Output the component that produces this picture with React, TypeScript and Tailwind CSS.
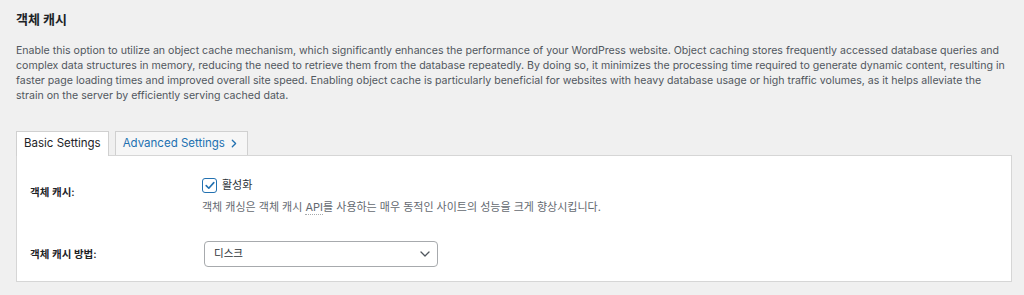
import React from "react";

const font = { fontFamily: 'Inter, "Noto Sans CJK KR", sans-serif' };

export default function App() {
  return (
    <div className="w-[1024px] h-[295px] bg-[#f0f0f0] px-4 overflow-hidden" style={font}>
      <h2 className="pt-[10px] text-[13px] leading-[18px] font-bold text-[#1d2327]">객체 캐시</h2>
      <p className="mt-[15px] w-[996px] whitespace-nowrap text-[10.58px] leading-[15px] text-[#50575e]">
        Enable this option to utilize an object cache mechanism, which significantly enhances the performance of your
        WordPress website. Object caching stores frequently accessed database queries and
        <br />
        complex data structures in memory, reducing the need to retrieve them from the database repeatedly. By doing
        so, it minimizes the processing time required to generate dynamic content, resulting in
        <br />
        faster page loading times and improved overall site speed. Enabling object cache is particularly beneficial for
        websites with heavy database usage or high traffic volumes, as it helps alleviate the
        <br />
        strain on the server by efficiently serving cached data.
      </p>

      <div className="mt-[28px] flex items-end gap-[6px]">
        <div className="relative z-10 -mb-px h-[25px] flex items-center border border-b-0 border-[#d0d0d0] bg-white px-[7px] text-[11.5px] text-[#1d2327]">
          Basic Settings
        </div>
        <div className="h-[24px] flex items-center gap-[6px] border border-b-0 border-[#d0d0d0] bg-[#f6f6f6] pl-[7px] pr-[10px] text-[11.5px] text-[#2271b1]">
          Advanced Settings
          <svg width="6" height="9" viewBox="0 0 6 9" fill="none">
            <path d="M1.3 1.2L4.6 4.5L1.3 7.8" stroke="#2271b1" strokeWidth="1.3" strokeLinecap="round" strokeLinejoin="round" />
          </svg>
        </div>
      </div>

      <div className="w-[996px] h-[127px] border border-[#d6d6d6] bg-white px-[13px]">
        <div className="flex">
          <div className="w-[172px] pt-[29px] text-[10.5px] leading-[15px] font-semibold text-[#1d2327]">
            객체 캐시:
          </div>
          <div className="pt-[22px]">
            <label className="flex items-center gap-[5px] h-[15px]">
              <span className="w-[15px] h-[15px] rounded-[3px] border-[1.5px] border-[#2271b1] flex items-center justify-center bg-white">
                <svg width="10" height="9" viewBox="0 0 10 9" fill="none">
                  <path d="M1.2 4.6L3.8 7.2L8.8 1.6" stroke="#2271b1" strokeWidth="1.6" strokeLinecap="round" strokeLinejoin="round" />
                </svg>
              </span>
              <span className="text-[11px] text-[#2c3338]">활성화</span>
            </label>
            <div className="mt-[7px] text-[11px] leading-[14px] text-[#646970] whitespace-nowrap">
              객체 캐싱은 객체 캐시{" "}
              <abbr className="no-underline border-b border-dotted border-[#a7aaad]" title="Application Programming Interface">
                API
              </abbr>
              를 사용하는 매우 동적인 사이트의 성능을 크게 향상시킵니다.
            </div>
          </div>
        </div>
        <div className="flex items-center mt-[27px]">
          <div className="w-[174px] text-[10.5px] leading-[15px] font-semibold text-[#1d2327]">객체 캐시 방법:</div>
          <div className="w-[234px] h-[26px] rounded-[4px] border border-[#a7aaad] bg-white flex items-center justify-between pl-[9px] pr-[7px]">
            <span className="text-[10.5px] text-[#2c3338]">디스크</span>
            <svg width="10" height="6" viewBox="0 0 10 6" fill="none">
              <path d="M1 1L5 5L9 1" stroke="#50575e" strokeWidth="1.3" strokeLinecap="round" strokeLinejoin="round" />
            </svg>
          </div>
        </div>
      </div>
    </div>
  );
}
